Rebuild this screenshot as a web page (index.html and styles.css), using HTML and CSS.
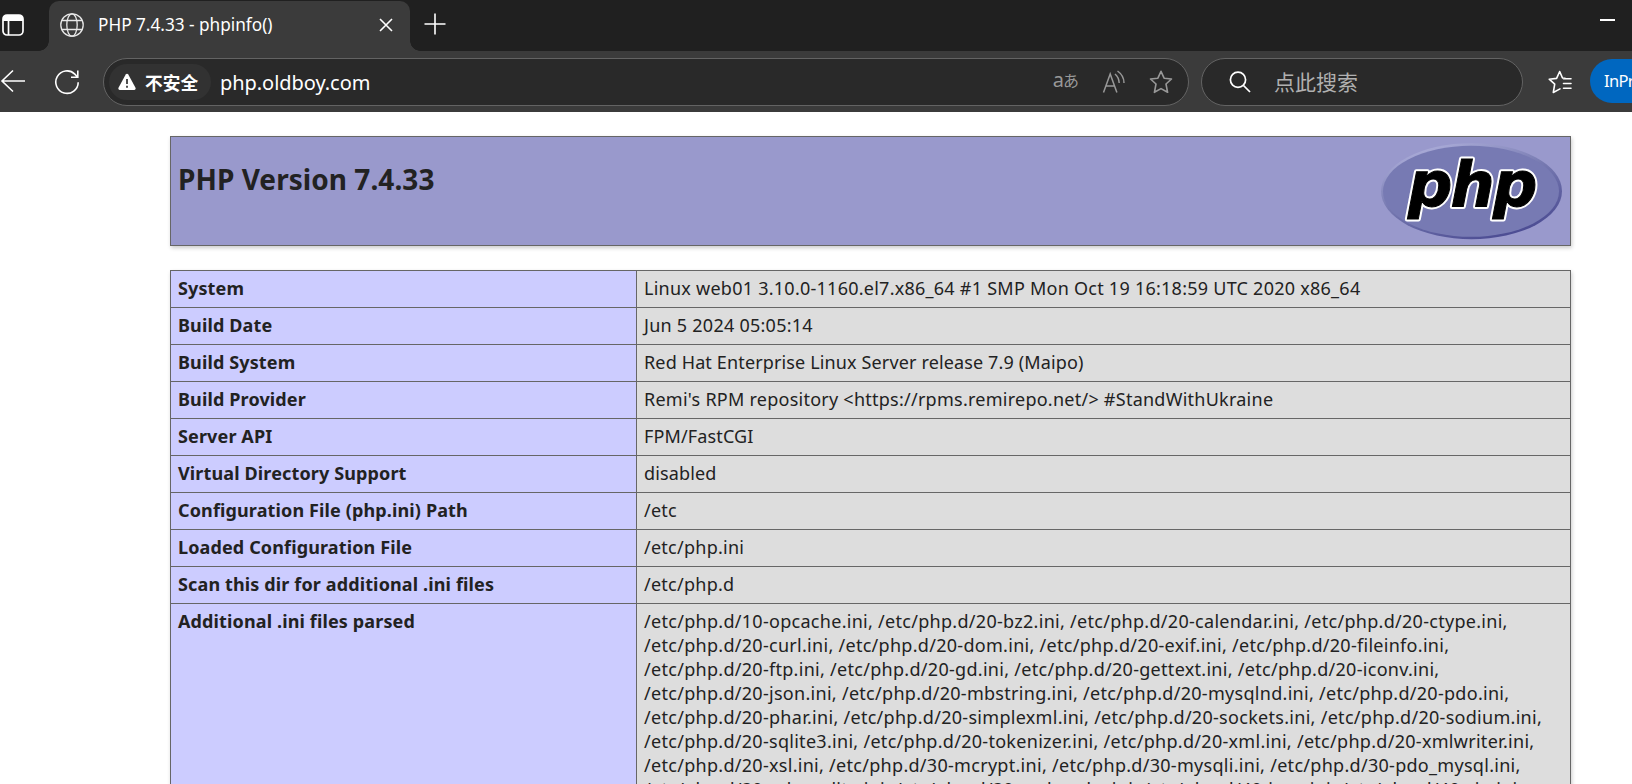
FILE: index.html
```html
<!DOCTYPE html>
<html lang="zh-CN">
<head>
<meta charset="utf-8">
<title>PHP 7.4.33 - phpinfo()</title>
<link rel="stylesheet" href="styles.css">
</head>
<body>
<header class="browser">
  <div class="tabstrip">
    <svg class="ws-icon" viewBox="0 0 26 24"><rect x="3" y="2" width="20" height="20" rx="4" fill="none" stroke="#fff" stroke-width="1.7"/><path d="M3 8V6a4 4 0 0 1 4-4h12a4 4 0 0 1 4 4v2z" fill="#fff"/><path d="M8.5 8v14" stroke="#fff" stroke-width="1.7"/></svg>
    <div class="tab">
      <svg class="globe" viewBox="0 0 24 24" fill="none" stroke="#e8e8e8" stroke-width="1.3"><circle cx="12" cy="12" r="11.2"/><ellipse cx="12" cy="12" rx="5.2" ry="11.2"/><path d="M2 7.5h20M2 16.5h20"/></svg>
      <span class="tab-title">PHP 7.4.33 - phpinfo()</span>
      <svg class="close" viewBox="0 0 14 14"><path d="M1 1l12 12M13 1L1 13" stroke="#fff" stroke-width="1.6"/></svg>
    </div>
    <svg class="plus" viewBox="0 0 22 22"><path d="M11 .5v21M.5 11h21" stroke="#fff" stroke-width="1.6"/></svg>
    <span class="minimize"></span>
  </div>
  <div class="toolbar">
    <svg class="back" viewBox="0 0 26 24" fill="none" stroke="#fff" stroke-width="1.6"><path d="M13 1.5L2 12l11 10.5M2 12h23"/></svg>
    <svg class="reload" viewBox="0 0 26 26" fill="none" stroke="#fff" stroke-width="1.6"><path d="M24.2 13.2A11.2 11.2 0 1 1 20.8 5.1L23.5 8M23.8 1.5V8.2H17"/></svg>
    <div class="address">
      <span class="badge"><svg viewBox="0 0 20 18"><path d="M8.7 1.5a1.5 1.5 0 0 1 2.6 0l7.2 13.3a1.5 1.5 0 0 1-1.3 2.2H2.8a1.5 1.5 0 0 1-1.3-2.2z" fill="#fff"/><path d="M10 6v5M10 12.8v2" stroke="#303030" stroke-width="1.7"/></svg><b>不安全</b></span>
      <span class="url">php.oldboy.com</span>
      <span class="translate">a<small>あ</small></span>
      <svg class="read" viewBox="0 0 24 24" fill="none" stroke="#989898" stroke-width="1.5"><path d="M1.5 22.5L8.2 4 14.9 22.5M4 16h8.5M13 4q4 3.5 4.2 9M15.5 1q6.500 4.500 6.500 12"/></svg>
      <svg class="star" viewBox="0 0 24 24" fill="none" stroke="#989898" stroke-width="1.6" stroke-linejoin="round"><path d="M12 1.3l3.1 6.900 7.400.8-5.500 5 1.600 8.300-6.600-3.700-6.600 3.700L7 14l-5.500-5 7.400-.8z"/></svg>
    </div>
    <div class="search">
      <svg class="lens" viewBox="0 0 22 22" fill="none" stroke="#fff" stroke-width="1.7"><circle cx="9" cy="8.8" r="7.6"/><path d="M14.5 14.5L21 21"/></svg>
      <span>点此搜索</span>
    </div>
    <svg class="favs" viewBox="0 0 24 24" fill="none" stroke="#fff" stroke-width="1.6" stroke-linejoin="round" stroke-linecap="round"><path d="M17 8.3L14.500 8 11.700 1.500 8.600 8.400 1.200 9.200 6.700 14.200 5.300 22.500 12 18.900M15.500 8.800h7.500M15.500 13.500h7.500M15.500 18.200h7.500"/></svg>
    <div class="inprivate">InPrivate</div>
  </div>
</header>
<main class="page">
  <section class="title-box">
    <h1>PHP Version 7.4.33</h1>
    <svg class="php-logo" viewBox="0 0 181 97">
      <defs>
        <linearGradient id="rim" x1="0.2" y1="0" x2="0.75" y2="1"><stop offset="0" stop-color="#b0b1dc"/><stop offset=".45" stop-color="#777ab1"/><stop offset="1" stop-color="#484890"/></linearGradient>
      </defs>
      <ellipse cx="90.5" cy="48.2" rx="90.5" ry="48" fill="url(#rim)"/>
      <ellipse cx="90" cy="48.3" rx="88" ry="45.5" fill="#777ab3"/>
      <text class="logo-text logo-outline" x="27" y="62.500">php</text>
      <text class="logo-text" x="27" y="62.500">php</text>
    </svg>
  </section>
  <table class="info">
    <tr><th>System</th><td>Linux web01 3.10.0-1160.el7.x86_64 #1 SMP Mon Oct 19 16:18:59 UTC 2020 x86_64</td></tr>
    <tr><th>Build Date</th><td>Jun 5 2024 05:05:14</td></tr>
    <tr><th>Build System</th><td class="tight">Red Hat Enterprise Linux Server release 7.9 (Maipo)</td></tr>
    <tr><th>Build Provider</th><td>Remi's RPM repository &lt;https://rpms.remirepo.net/&gt; #StandWithUkraine</td></tr>
    <tr><th>Server API</th><td class="tight">FPM/FastCGI</td></tr>
    <tr><th>Virtual Directory Support</th><td class="tight">disabled</td></tr>
    <tr><th>Configuration File (php.ini) Path</th><td>/etc</td></tr>
    <tr><th>Loaded Configuration File</th><td>/etc/php.ini</td></tr>
    <tr><th>Scan this dir for additional .ini files</th><td>/etc/php.d</td></tr>
    <tr><th>Additional .ini files parsed</th><td class="files">/etc/php.d/10-opcache.ini, /etc/php.d/20-bz2.ini, /etc/php.d/20-calendar.ini, /etc/php.d/20-ctype.ini,<br>/etc/php.d/20-curl.ini, /etc/php.d/20-dom.ini, /etc/php.d/20-exif.ini, /etc/php.d/20-fileinfo.ini,<br>/etc/php.d/20-ftp.ini, /etc/php.d/20-gd.ini, /etc/php.d/20-gettext.ini, /etc/php.d/20-iconv.ini,<br>/etc/php.d/20-json.ini, /etc/php.d/20-mbstring.ini, /etc/php.d/20-mysqlnd.ini, /etc/php.d/20-pdo.ini,<br>/etc/php.d/20-phar.ini, /etc/php.d/20-simplexml.ini, /etc/php.d/20-sockets.ini, /etc/php.d/20-sodium.ini,<br>/etc/php.d/20-sqlite3.ini, /etc/php.d/20-tokenizer.ini, /etc/php.d/20-xml.ini, /etc/php.d/20-xmlwriter.ini,<br>/etc/php.d/20-xsl.ini, /etc/php.d/30-mcrypt.ini, /etc/php.d/30-mysqli.ini, /etc/php.d/30-pdo_mysql.ini,<br>/etc/php.d/30-pdo_sqlite.ini, /etc/php.d/30-xmlreader.ini, /etc/php.d/40-json.ini, /etc/php.d/40-zip.ini</td></tr>
  </table>
</main>
</body>
</html>
```
FILE: styles.css
```css
* { box-sizing: border-box; }
body { margin: 0; height: 784px; overflow: hidden; background: #fff; color: #222; font-family: "Noto Sans", "Noto Sans CJK SC", sans-serif; }
svg { display: block; flex: none; }
.browser { height: 112px; background: #3b3b3b; color: #fff; overflow: hidden; }
.tabstrip { height: 51px; background: #202020; display: flex; align-items: flex-start; }
.ws-icon { width: 26px; height: 24px; margin: 13px 23px 0 0; }
.tab { position: relative; width: 361px; height: 50px; margin-top: 1px; background: #3b3b3b; border-radius: 10px 10px 0 0; display: flex; align-items: center; padding: 0 17px 3px 11px; }
.tab::before, .tab::after { content: ""; position: absolute; bottom: 0; width: 10px; height: 10px; }
.tab::before { right: 100%; background: radial-gradient(circle at 0 0, transparent 9.5px, #3b3b3b 10px); }
.tab::after { left: 100%; background: radial-gradient(circle at 100% 0, transparent 9.5px, #3b3b3b 10px); }
.globe { width: 24px; height: 24px; }
.tab-title { font-size: 17.2px; margin-left: 14px; flex: 1; white-space: nowrap; }
.close { width: 14px; height: 14px; }
.plus { width: 22px; height: 22px; margin: 13px 0 0 14px; }
.minimize { width: 15px; height: 2px; background: #fff; margin: 19px 17px 0 auto; }
.toolbar { height: 61px; display: flex; align-items: center; }
.toolbar > * { flex: none; }
.back { width: 26px; height: 24px; margin-bottom: 1px; }
.reload { width: 26px; height: 26px; margin-left: 28px; }
.address { width: 1086px; height: 48px; margin-left: 23px; border: 1.5px solid #636363; border-radius: 24px; background: #292929; display: flex; align-items: center; padding: 0 15px 0 5px; }
.badge { width: 102px; height: 36px; border-radius: 18px; background: #323232; display: flex; align-items: center; padding-left: 8px; }
.badge svg { width: 20px; height: 18px; margin-right: 8px; }
.badge b { font-size: 17.7px; line-height: 24px; font-family: "Noto Sans CJK SC", sans-serif; }
.url { font-size: 20px; letter-spacing: -.05px; margin: 1px 0 0 9px; flex: 1; }
.translate { color: #989898; font-size: 20px; line-height: 24px; display: flex; align-items: center; margin-top: -3px; }
.translate small { font-size: 16px; margin-top: 2px; margin-left: -1px; }
.read { width: 24px; height: 24px; margin-left: 23px; }
.star { width: 24px; height: 24px; margin-left: 23px; }
.search { width: 322px; height: 48px; margin-left: 12px; border: 1.5px solid #636363; border-radius: 24px; background: #292929; display: flex; align-items: center; padding-left: 27px; color: #b0b0b0; font-size: 21px; }
.search span { margin: -2px 0 0 23px; }
.lens { width: 22px; height: 22px; }
.favs { width: 24px; height: 24px; margin-left: 25px; }
.inprivate { width: 120px; height: 44px; margin: 0 0 2px 18px; border-radius: 22px; background: #0067c0; padding-left: 14px; font-size: 16.5px; letter-spacing: -.7px; line-height: 44px; }
.page { width: 1401px; margin: 24px 0 0 170px; }
.title-box { height: 110px; border: 1px solid #666; background: #9999cc; box-shadow: 1px 2px 4px #ccc; display: flex; justify-content: space-between; padding: 6px 8px 6px 7px; }
h1 { margin: 16px 0 0; font-size: 28px; line-height: 41px; letter-spacing: .05px; }
.php-logo { width: 181px; height: 97px; }
.logo-text { font: italic bold 62px "DejaVu Sans", sans-serif; letter-spacing: -1.800px; fill: #000; stroke: #000; stroke-width: 1px; }
.logo-outline { stroke: #fff; stroke-width: 5px; stroke-linejoin: round; }
.info { width: 1401px; margin-top: 24px; border-collapse: collapse; box-shadow: 1px 2px 4px #ccc; font-size: 18px; line-height: 24px; table-layout: fixed; }
th, td { border: 1px solid #666; padding: 5px 7px 7px; vertical-align: top; text-align: left; white-space: nowrap; }
th { width: 466px; background: #ccccff; letter-spacing: .13px; }
td { background: #ddd; letter-spacing: .25px; }
.tight { letter-spacing: .14px; }
.files { letter-spacing: .29px; }
```
